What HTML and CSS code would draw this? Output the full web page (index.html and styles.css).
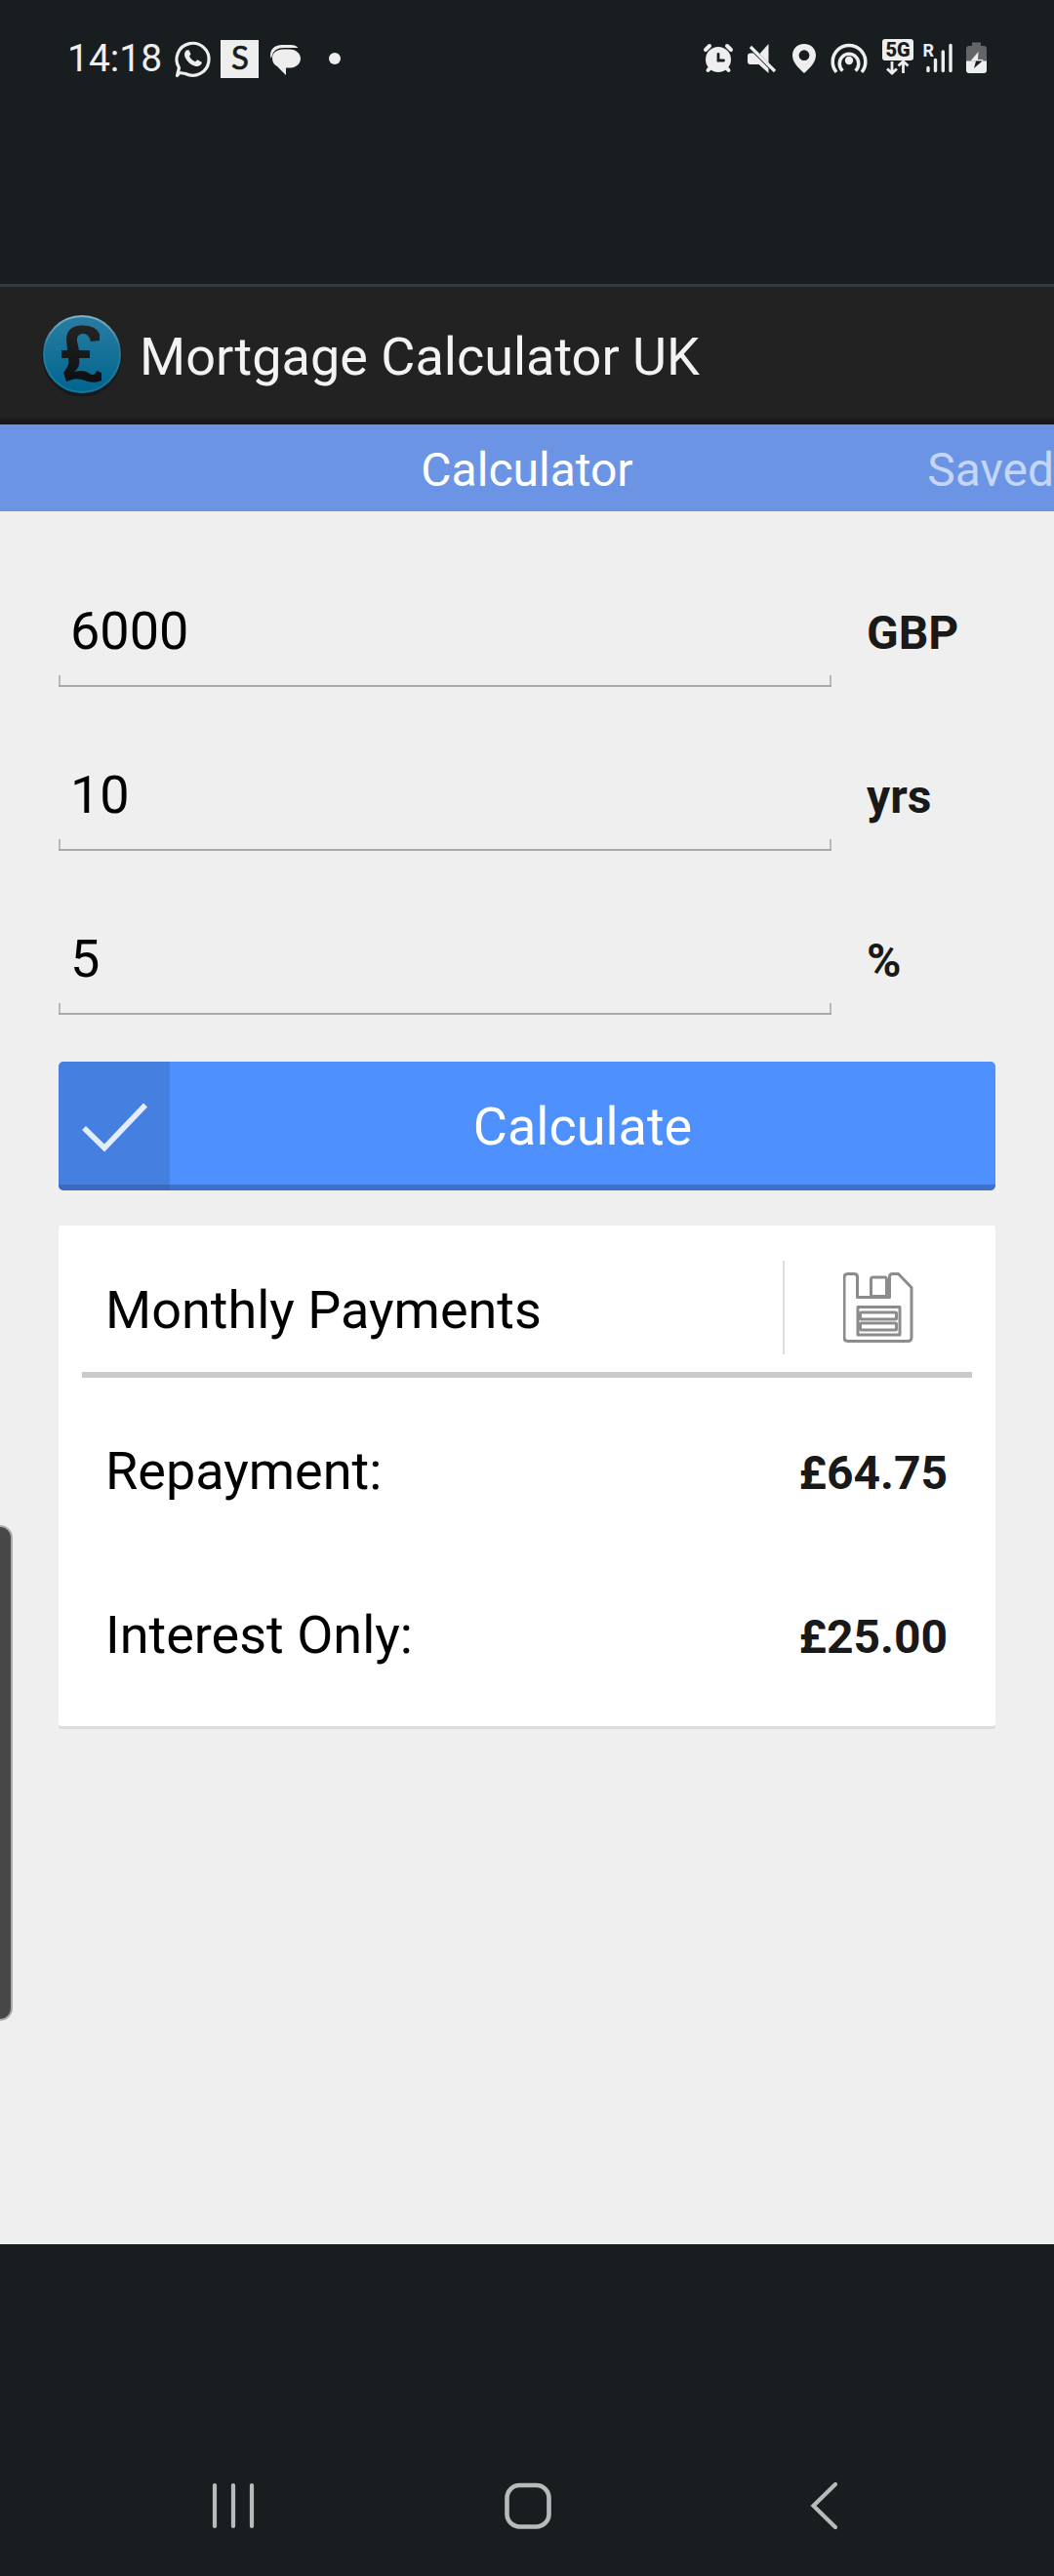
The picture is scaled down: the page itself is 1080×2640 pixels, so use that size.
FILE: index.html
```html
<!DOCTYPE html>
<html lang="en">
<head>
<meta charset="utf-8">
<title>Mortgage Calculator UK</title>
<link rel="stylesheet" href="styles.css">
</head>
<body>
<div class="screen">
  <div class="status-bar">
    <span class="clock">14:18</span>
    <svg class="status-left" width="190" height="60" viewBox="170 30 190 60">
      <path d="M184 74.5 L181.5 77.5 L183.500 69.500 A16.500 16.500 0 1 1 190 75.500 Z" fill="none" stroke="#eee" stroke-width="3.200" stroke-linejoin="round"/>
      <path d="M191 51.500q-3 3-1.500 7q4 8 11 9.500q5 .5 6.500-4l-4.500-2.800l-2.500 2q-4-1.500-6-5.500l1.500-2.500l-2-4z" fill="#eee"/>
      <rect x="226" y="41" width="39" height="39" fill="#eee"/>
      <text class="badge-letter" x="246" y="71.300" text-anchor="middle">S</text>
      <path d="M277.500 60C275.500 51 281 46 289 46h9q5 0 7.500 3h-14.500Q280 49 278.500 58z" fill="#eee"/>
      <path d="M290.500 50.500h6c7 0 11.500 4.500 11.500 9.500s-4 9-10 9.500h-5v7.500l-9-9c-3.500-2-5-4.500-5-8.500 0-5.500 4.500-9 11.500-9z" fill="#eee"/>
      <circle cx="343" cy="60" r="6" fill="#eee"/>
    </svg>
    <svg class="status-right" width="300" height="60" viewBox="715 30 300 60">
      <g fill="#eee" stroke="#eee" stroke-linecap="round">
        <circle cx="736" cy="61" r="13" stroke="none"/>
        <path d="M723 51l4-4M749 51l-4-4M725.500 72l3-3.500M746.500 72l-3-3.500" stroke-width="4"/>
        <path d="M736 55.500v6.500h5.500" fill="none" stroke="#181d20" stroke-width="2.800"/>
        <path d="M787.500 45v19.500L778.500 55zM766 57.500q0-3 3-3h3L787.500 70v5l-10-9H769q-3 0-3-3z" stroke="none"/>
        <path d="M769 48l25 25" stroke-width="3.200" stroke-linecap="butt"/>
        <path fill-rule="evenodd" stroke="none" d="M824 45c-7.500 0-12 5.300-12 11.800C812 64 818 69.500 824 75c6-5.500 12-11 12-18.200C836 50.300 831.500 45 824 45zm0 6.300a5.400 5.400 0 1 1 0 10.800 5.400 5.400 0 0 1 0-10.800z"/>
        <circle cx="870" cy="62" r="4.200" stroke="none"/>
        <g fill="none" stroke-width="3.500" stroke-linecap="butt"><path d="M863.500 72.500A9.800 9.800 0 1 1 876.500 72.500"/><path d="M857 74A16.800 16.800 0 1 1 883 74"/></g>
        <rect x="904" y="40" width="32" height="22" rx="3" stroke="none"/>
        <path d="M914 63v12M909 70.500l5 4.500 5-4.500M925.500 75V64M920.500 67.500l5-4.500 5 4.500" fill="none" stroke-width="2.800" stroke-linecap="butt"/>
        <path d="M951 69.500v3M958.500 61.500v11M966.300 53v19.500M974 46.500v26" fill="none" stroke-width="3.400"/>
      </g>
      <text class="net-label" x="920" y="58.300" text-anchor="middle">5G</text>
      <text class="roaming" x="945.500" y="57.500">R</text>
      <path d="M990 63V50q0-3 3-3h3v-3.500h9V47h3q3 0 3 3v13z" fill="#626668"/>
      <path d="M990 62.500h21V72q0 3-3 3h-15q-3 0-3-3z" fill="#eee"/>
      <path d="M1002.500 53l-8 9.500h13l-.5-1.500h-5z" fill="#eee"/>
      <path d="M1000 62.500h6.500l-8.500 7.500z" fill="#181d20"/>
    </svg>
  </div>
  <header class="app-bar">
    <svg class="app-logo" width="90" height="100" viewBox="39 315 90 100">
      <defs>
        <linearGradient id="coin" x1="0" y1="0" x2="0" y2="1"><stop offset="0" stop-color="#2a7ca1"/><stop offset="1" stop-color="#00658f"/></linearGradient>
        <linearGradient id="rim" x1="0" y1="0" x2="0" y2="1"><stop offset="0" stop-color="#7eb3cc"/><stop offset=".4" stop-color="#2d7899"/><stop offset="1" stop-color="#087aa5"/></linearGradient>
        <linearGradient id="ink" x1="0" y1="0" x2="0" y2="1"><stop offset="0" stop-color="#242424"/><stop offset="1" stop-color="#0c0e10"/></linearGradient>
      </defs>
      <circle cx="84" cy="365.500" r="41" fill="#191919"/>
      <circle cx="84" cy="363" r="39" fill="url(#coin)" stroke="url(#rim)" stroke-width="2"/>
      <path fill="url(#ink)" d="M68 347Q69 334 83 333.500Q98 333 102 342V349L93 350Q91 341 84 342Q78 343 79 350L81 359H92V367H81Q83 376 76 381Q86 378 92 383Q97 386 99 380L104 382V390Q98 393 90 391Q80 387 74 389L68 391L65 382Q72 374 70 367H63V359H69Z"/>
    </svg>
    <h1 class="app-title">Mortgage Calculator UK</h1>
  </header>
  <nav class="tabs"><span class="tab active">Calculator</span><span class="tab next">Saved</span></nav>
  <main class="content">
    <div class="field-row"><div class="field">6000</div><span class="unit">GBP</span></div>
    <div class="field-row"><div class="field">10</div><span class="unit">yrs</span></div>
    <div class="field-row"><div class="field">5</div><span class="unit">%</span></div>
    <div class="calculate">
      <div class="check"><svg width="114" height="132" viewBox="60 1088 114 132"><path d="M86 1156l21 20.500 42-44" fill="none" stroke="#e4edfb" stroke-width="5.600"/></svg></div>
      <span class="calculate-label">Calculate</span>
    </div>
    <section class="card">
      <div class="card-head">
        <h2 class="card-title">Monthly Payments</h2>
        <div class="save">
          <svg width="72" height="74" viewBox="864 1303 72 74" fill="none" stroke="#8c8c8c" stroke-width="3" stroke-linejoin="round">
            <path d="M869 1305.500h6q3.500 0 3.500 3v21h33v-21q0-3 3-3h6l13.500 14v51q0 4-4 4h-61q-4 0-4-4v-61q0-4 4-4z"/>
            <rect x="892.500" y="1309" width="16" height="19.500" rx="2"/>
            <rect x="879" y="1339.500" width="43" height="28.500"/>
            <rect x="881.500" y="1345" width="37" height="7" rx="1"/>
            <rect x="881.500" y="1356" width="37" height="7" rx="1"/>
          </svg>
        </div>
      </div>
      <div class="result"><span>Repayment:</span><strong class="amount">£64.75</strong></div>
      <div class="result"><span>Interest Only:</span><strong class="amount">£25.00</strong></div>
    </section>
  </main>
  <footer class="nav-bar">
    <svg width="1080" height="60" viewBox="0 2538 1080 60" fill="none" stroke="#b8bbbc" stroke-width="4.200" stroke-linecap="round">
      <path d="M220 2547v42M239 2547v42M258 2547v42"/>
      <rect x="519.500" y="2547" width="43" height="42.500" rx="13" stroke-width="4.600"/>
      <path d="M856 2546l-22.500 22 22.500 22" stroke-linejoin="miter"/>
    </svg>
  </footer>
  <div class="edge-handle"></div>
</div>
</body>
</html>
```
FILE: styles.css
```css
* { box-sizing: border-box; }
body { margin: 0; font-family: Roboto, "Liberation Sans", sans-serif; background: #181d20; }
.screen { position: relative; width: 1080px; height: 2640px; overflow: hidden; display: flex; flex-direction: column; background: #181d20; }
svg { display: block; flex: none; }
.status-bar { height: 291px; padding: 30px 65px 0 69px; display: flex; align-items: flex-start; color: #eee; }
.clock { width: 101px; font-size: 39px; line-height: 60px; white-space: nowrap; }
.status-right { margin-left: auto; }
.badge-letter { font: 33px Lato, sans-serif; fill: #181d20; stroke: #181d20; stroke-width: .7px; }
.net-label { font: 900 20px Roboto, sans-serif; fill: #181d20; }
.roaming { font: 700 18px Roboto, sans-serif; fill: #eee; }
.app-bar { height: 144px; border-top: 3px solid #35393c; background: linear-gradient(#222 0 134px, #1c1c1e 135px, #14161c 141px); display: flex; align-items: center; padding-left: 39px; }
.app-logo { margin-top: 1px; }
.app-title { margin: 3px 0 0 14px; font-size: 54px; line-height: 64px; font-weight: 400; color: #f3f3f3; white-space: nowrap; }
.tabs { height: 89px; background: #6b95e4; display: grid; grid-template-columns: 1fr auto 1fr; align-items: center; font-size: 48px; line-height: 56px; color: #fff; padding-top: 4px; }
.active { grid-column: 2; }
.next { justify-self: end; color: #c4d5f6; }
.content { height: 1776px; background: #efefef; padding: 42px 60px 0; }
.field-row { height: 168px; display: flex; gap: 36px; align-items: flex-start; padding-top: 36px; }
.field { position: relative; width: 792px; height: 102px; padding: 13px 12px 0; border-bottom: 2px solid #a8a8a8; font-size: 54px; line-height: 64px; color: #000; }
.field::before, .field::after { content: ""; position: absolute; bottom: 0; width: 2px; height: 10px; background: #b8b8b8; }
.field::before { left: 0; }
.field::after { right: 0; }
.unit { padding-top: 19px; font-size: 48px; line-height: 56px; font-weight: 700; color: #191919; }
.calculate { margin-top: 18px; height: 132px; border-radius: 5px; overflow: hidden; display: flex; align-items: center; background: linear-gradient(#4e90fe 0 126px, #3d72cc 126px); color: #fff; font-size: 54px; }
.check { background: rgba(50, 90, 155, .3); }
.calculate-label { flex: 1; text-align: center; line-height: 64px; padding-top: 2px; }
.card { margin-top: 36px; height: 513px; padding: 0 24px; background: #fff; border-radius: 3px; box-shadow: 0 3px #dcdcdc; color: #000; font-size: 54px; line-height: 64px; }
.card-head { height: 156px; border-bottom: 6px solid #cacaca; display: flex; align-items: center; padding: 30px 0 6px; margin-bottom: 12px; }
.card-title { margin: 0; padding: 0 0 0 24px; width: 718px; font: inherit; }
.save { width: 194px; height: 96px; margin-top: -6px; border-left: 2px solid #ddd; display: flex; align-items: center; justify-content: center; }
.result { height: 168px; padding: 0 25px 0 24px; display: flex; justify-content: space-between; align-items: center; }
.amount { font-size: 48px; color: #191919; font-weight: 700; padding-top: 4px; }
.nav-bar { padding-top: 238px; }
.edge-handle { position: absolute; left: -14px; top: 1563px; width: 27px; height: 508px; background: #474747; border: 2px solid #aaa; border-radius: 13px; }
```
